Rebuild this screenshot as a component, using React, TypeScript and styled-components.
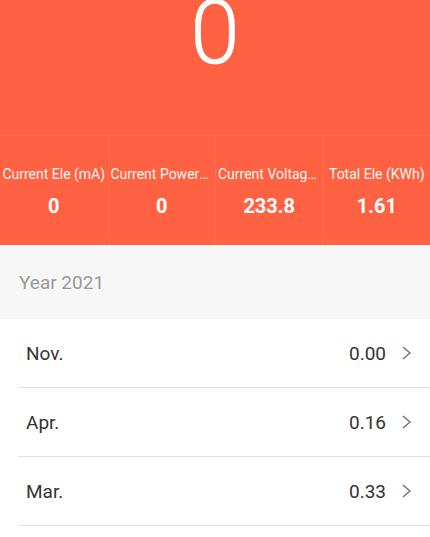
import { FunctionComponent } from 'react';
import styled, { createGlobalStyle } from 'styled-components';

interface Stat {
  label: string;
  value: string;
}

interface MonthRecord {
  month: string;
  value: string;
}

const stats: Stat[] = [
  { label: 'Current Ele (mA)', value: '0' },
  { label: 'Current Power(W)', value: '0' },
  { label: 'Current Voltage (V)', value: '233.8' },
  { label: 'Total Ele (KWh)', value: '1.61' },
];

const records: MonthRecord[] = [
  { month: 'Nov.', value: '0.00' },
  { month: 'Apr.', value: '0.16' },
  { month: 'Mar.', value: '0.33' },
];

const App: FunctionComponent = () => {
  return (
    <>
      <GlobalStyle />
      <Page>
        {/* Header */}
        <Header>
          <BigNumber>0</BigNumber>
          <StatGrid>
            {stats.map((s) => (
              <StatCell key={s.label}>
                <StatLabel>{s.label}</StatLabel>
                <StatValue>{s.value}</StatValue>
              </StatCell>
            ))}
          </StatGrid>
        </Header>

        <YearBand>Year 2021</YearBand>

        <List>
          {records.map((r) => (
            <Row key={r.month}>
              <Month>{r.month}</Month>
              <RowRight>
                <Amount>{r.value}</Amount>
                <Chevron viewBox="0 0 9 14" width="9" height="14">
                  <path d="M1 1l7 6-7 6" fill="none" stroke="#6b6b6b" strokeWidth="1.3" />
                </Chevron>
              </RowRight>
            </Row>
          ))}
        </List>
      </Page>
    </>
  );
};

const GlobalStyle = createGlobalStyle`
  html, body {
    margin: 0;
    padding: 0;
    background: #ffffff;
  }
  body {
    font-family: Roboto, "Noto Sans", "Liberation Sans", sans-serif;
  }
`;

const Page = styled.div`
  width: 100%;
  overflow: hidden;
`;

const Header = styled.div`
  background-color: #ff6242;
  color: #ffffff;
`;

const BigNumber = styled.div`
  height: 135px;
  font-size: 89px;
  font-weight: 300;
  line-height: 66px;
  text-align: center;
  overflow: hidden;
  -webkit-text-stroke: 0.6px #ffffff;
`;

const StatGrid = styled.div`
  display: grid;
  grid-template-columns: repeat(4, 1fr);
  height: 110px;
  border-top: 1px solid rgba(255, 255, 255, 0.08);
  box-sizing: border-box;
`;

const StatCell = styled.div`
  display: flex;
  flex-direction: column;
  align-items: center;
  justify-content: center;
  gap: 12px;
  min-width: 0;
  padding: 2px 2px 0;
  border-left: 1px solid rgba(255, 255, 255, 0.08);

  &:first-child {
    border-left: none;
  }
`;

const StatLabel = styled.div`
  max-width: 100%;
  font-size: 14px;
  white-space: nowrap;
  overflow: hidden;
  text-overflow: ellipsis;
  opacity: 0.95;
`;

const StatValue = styled.div`
  font-size: 20px;
  font-weight: 700;
`;

const YearBand = styled.div`
  height: 74px;
  display: flex;
  align-items: center;
  padding-left: 19px;
  background-color: #f7f7f7;
  color: #999999;
  font-size: 19px;
`;

const List = styled.div`
  padding-left: 18px;
  background: #ffffff;
`;

const Row = styled.div`
  display: flex;
  align-items: center;
  justify-content: space-between;
  height: 69px;
  padding: 0 19px 0 8px;
  border-bottom: 1px solid #e2e2e2;
  box-sizing: border-box;
  color: #333333;
  font-size: 19px;
`;

const Month = styled.span``;

const RowRight = styled.div`
  display: flex;
  align-items: center;
  gap: 16px;
`;

const Amount = styled.span``;

const Chevron = styled.svg`
  display: block;
`;

export default App;
